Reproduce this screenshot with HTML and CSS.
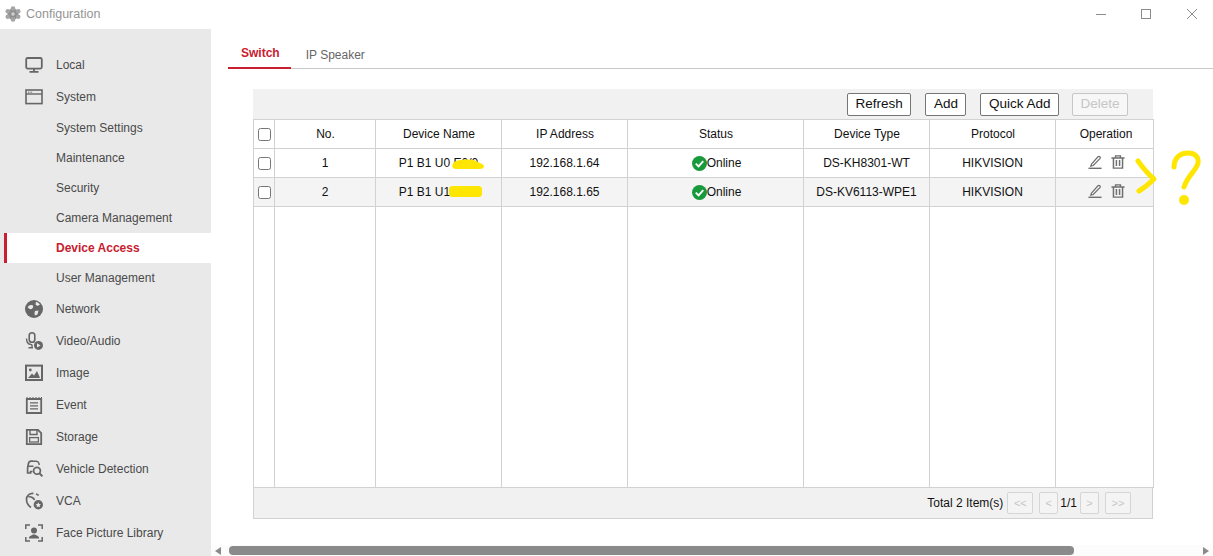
FILE: index.html
```html
<!DOCTYPE html>
<html lang="en">
<head>
    <meta charset="UTF-8">
    <meta name="viewport" content="width=device-width, initial-scale=1.0">
    <title>Configuration</title>
    <link rel="stylesheet" href="styles.css">
</head>
<body>
    <header class="titlebar">
        <div class="app-title">
            <svg class="app-logo" viewBox="0 0 16 16"><circle cx="8" cy="8" r="5.5" fill="#8f8f8f"/><circle cx="8" cy="2.6" r="2.3" fill="#a5a5a5"/><circle cx="8" cy="13.4" r="2.3" fill="#a5a5a5"/><circle cx="2.8" cy="5.2" r="2.3" fill="#a5a5a5"/><circle cx="13.2" cy="5.2" r="2.3" fill="#a5a5a5"/><circle cx="2.8" cy="10.8" r="2.3" fill="#a5a5a5"/><circle cx="13.2" cy="10.8" r="2.3" fill="#a5a5a5"/><circle cx="8" cy="8" r="1.8" fill="#d0d0d0"/></svg>
            <span>Configuration</span>
        </div>
        <div class="window-controls">
            <svg class="win-btn" viewBox="0 0 12 12"><path d="M2 6.5H12" stroke="#8c8c8c" fill="none"/></svg>
            <svg class="win-btn" viewBox="0 0 12 12"><rect x="1.5" y="1.5" width="9" height="9" stroke="#8c8c8c" fill="none"/></svg>
            <svg class="win-btn" viewBox="0 0 12 12"><path d="M1 1L11 11M11 1L1 11" stroke="#8c8c8c" fill="none"/></svg>
        </div>
    </header>

    <div class="layout">
        <nav class="sidebar">
            <a class="nav-item">
                <svg class="nav-icon" viewBox="0 0 18 18"><rect x="1.2" y="2" width="15.6" height="10.6" rx="1.5" fill="none" stroke="#666" stroke-width="1.8"/><path d="M9 13V15.5M4.5 15.8H13.5" stroke="#666" stroke-width="1.8" fill="none"/></svg>
                Local
            </a>
            <a class="nav-item">
                <svg class="nav-icon" viewBox="0 0 18 18"><rect x="1" y="2" width="16" height="13.6" fill="none" stroke="#666" stroke-width="1.6"/><path d="M1 6H17" stroke="#666" stroke-width="1.4"/><path d="M3 4.2H7.5" stroke="#666" stroke-dasharray="1 .6"/></svg>
                System
            </a>
            <a class="nav-sub">System Settings</a>
            <a class="nav-sub">Maintenance</a>
            <a class="nav-sub">Security</a>
            <a class="nav-sub">Camera Management</a>
            <a class="nav-sub active">Device Access</a>
            <a class="nav-sub">User Management</a>
            <a class="nav-item">
                <svg class="nav-icon" viewBox="0 0 18 18"><circle cx="9" cy="9" r="9" fill="#666"/><path d="M2.5 7C4.5 4.8 6.5 4.5 8 5.5C8.8 7 7.5 9 5.8 9.3C4.5 9 3.3 8 2.5 7ZM10 11L13.5 10.5L12.5 14.5L10 15.5C9.4 14 9.4 12.5 10 11ZM11 1.8C12.5 2.3 14 3.3 15 4.6L12.5 6L10.5 4.5Z" fill="#e9e9e9"/></svg>
                Network
            </a>
            <a class="nav-item">
                <svg class="nav-icon" viewBox="0 0 18 18"><rect x="4.2" y="0.8" width="5.6" height="9.4" rx="2.8" fill="none" stroke="#666" stroke-width="1.6"/><path d="M1.5 6.5C1.5 12 4.5 12.6 7 12.6M7 12.6V15.5M3.5 15.8H8" fill="none" stroke="#666" stroke-width="1.4"/><circle cx="13.5" cy="13.4" r="4.5" fill="#666"/><path d="M12 11.2V15.6L15.6 13.4Z" fill="#e9e9e9"/></svg>
                Video/Audio
            </a>
            <a class="nav-item">
                <svg class="nav-icon" viewBox="0 0 18 18"><rect x="1" y="1.6" width="16" height="14.4" fill="none" stroke="#666" stroke-width="2"/><circle cx="5.3" cy="6" r="1.4" fill="#666"/><path d="M3 14L7 9.5L9 11.5L12 7L15 14Z" fill="#666"/></svg>
                Image
            </a>
            <a class="nav-item">
                <svg class="nav-icon" viewBox="0 0 18 18"><path d="M1.8 3H16.2V17H1.8Z" fill="none" stroke="#666" stroke-width="1.8"/><path d="M2 1V3M5 1V3M8 1V3M11 1V3M14 1V3M16.5 1V3" stroke="#666"/><path d="M5 6.8H13M5 9.8H13M5 12.8H13" stroke="#666" stroke-width="1.2"/></svg>
                Event
            </a>
            <a class="nav-item">
                <svg class="nav-icon" viewBox="0 0 18 18"><path d="M1.8 1.8H13L16.2 5V16.2H1.8Z" fill="none" stroke="#666" stroke-width="1.8"/><path d="M5 2V6.5H12V2" fill="none" stroke="#666" stroke-width="1.4"/><rect x="4.6" y="9.6" width="8.8" height="4.4" fill="none" stroke="#666" stroke-width="1.3"/></svg>
                Storage
            </a>
            <a class="nav-item">
                <svg class="nav-icon" viewBox="0 0 18 18"><path d="M8 1.2H6C4.4 1.2 3.8 2.2 3.4 3.8L2.6 8V13H5.6V11.5H7.5" fill="none" stroke="#666" stroke-width="1.7"/><path d="M8 1.2H11.5C12.8 1.2 13.6 2.2 14 3.6L14.3 5M3 6.2H8.5" fill="none" stroke="#666" stroke-width="1.5"/><circle cx="12" cy="10.8" r="3.4" fill="none" stroke="#666" stroke-width="1.7"/><path d="M14.5 13.4L17.4 16.4" stroke="#666" stroke-width="2"/></svg>
                Vehicle Detection
            </a>
            <a class="nav-item">
                <svg class="nav-icon" viewBox="0 0 18 18"><path d="M8.5 1.5C4.5 1.2 1.5 3.5 1.5 7.5C1.5 11 3 13.5 6 15.5M11 2C12 2.3 13 2.8 13.6 3.6M3.5 5C6 4 9 6.5 9.5 8" fill="none" stroke="#666" stroke-width="1.7"/><circle cx="13.3" cy="12.8" r="4.7" fill="#666"/><path d="M13.3 10.2L14.1 12L16 12.2L14.6 13.4L15 15.3L13.3 14.4L11.6 15.3L12 13.4L10.6 12.2L12.5 12Z" fill="#e9e9e9"/></svg>
                VCA
            </a>
            <a class="nav-item">
                <svg class="nav-icon" viewBox="0 0 18 18"><path d="M0.8 5V1H5M13 1H17.2V5M0.8 13V17H5M13 17H17.2V13" fill="none" stroke="#666" stroke-width="1.5"/><circle cx="9" cy="6.5" r="3" fill="#666"/><path d="M3.8 14.5C4 11.5 7 11.5 7.8 10.5H10.2C11 11.5 14 11.5 14.2 14.5Z" fill="#666"/></svg>
                Face Picture Library
            </a>
        </nav>

        <main class="main">
            <div class="tabs">
                <span class="tab active">Switch</span>
                <span class="tab">IP Speaker</span>
            </div>

            <section class="panel">
                <div class="toolbar">
                    <button class="button">Refresh</button>
                    <button class="button">Add</button>
                    <button class="button">Quick Add</button>
                    <button class="button" disabled>Delete</button>
                </div>
                <table class="device-table">
                    <colgroup>
                        <col class="col-check">
                        <col class="col-no">
                        <col class="col-wide">
                        <col class="col-wide">
                        <col class="col-status">
                        <col class="col-wide">
                        <col class="col-wide">
                        <col class="col-op">
                    </colgroup>
                    <thead>
                        <tr>
                            <th><input type="checkbox"></th>
                            <th>No.</th>
                            <th>Device Name</th>
                            <th>IP Address</th>
                            <th>Status</th>
                            <th>Device Type</th>
                            <th>Protocol</th>
                            <th>Operation</th>
                        </tr>
                    </thead>
                    <tbody>
                        <tr>
                            <td><input type="checkbox"></td>
                            <td>1</td>
                            <td>P1 B1 U0 E0/0</td>
                            <td>192.168.1.64</td>
                            <td><span class="status"><svg class="status-icon" viewBox="0 0 16 16"><circle cx="8" cy="8" r="8" fill="#189a3c"/><path d="M4 8.2L7 11L12 5.4" fill="none" stroke="#fff" stroke-width="2"/></svg>Online</span></td>
                            <td>DS-KH8301-WT</td>
                            <td>HIKVISION</td>
                            <td>
                                <span class="ops">
                                    <svg class="op-icon" viewBox="0 0 16 16"><path d="M4 10.4L11.4 2C12 1.4 12.9 1.4 13.5 2C14.1 2.6 14.1 3.5 13.6 4.1L6 12L3.2 12.8Z" fill="none" stroke="#6f6f6f" stroke-width="1.4"/><path d="M0.5 15.2H15.5" stroke="#6f6f6f" stroke-width="1.6"/></svg>
                                    <svg class="op-icon" viewBox="0 0 16 16"><path d="M0.5 3.4H15.5M5.2 3V1H10.8V3" fill="none" stroke="#6f6f6f" stroke-width="1.6"/><path d="M2.8 3.4V15H13.2V3.4M6.2 5.8V12.6M9.8 5.8V12.6" fill="none" stroke="#6f6f6f" stroke-width="1.7"/></svg>
                                </span>
                            </td>
                        </tr>
                        <tr class="even">
                            <td><input type="checkbox"></td>
                            <td>2</td>
                            <td>P1 B1 U1 E0/0</td>
                            <td>192.168.1.65</td>
                            <td><span class="status"><svg class="status-icon" viewBox="0 0 16 16"><circle cx="8" cy="8" r="8" fill="#189a3c"/><path d="M4 8.2L7 11L12 5.4" fill="none" stroke="#fff" stroke-width="2"/></svg>Online</span></td>
                            <td>DS-KV6113-WPE1</td>
                            <td>HIKVISION</td>
                            <td>
                                <span class="ops">
                                    <svg class="op-icon" viewBox="0 0 16 16"><path d="M4 10.4L11.4 2C12 1.4 12.9 1.4 13.5 2C14.1 2.6 14.1 3.5 13.6 4.1L6 12L3.2 12.8Z" fill="none" stroke="#6f6f6f" stroke-width="1.4"/><path d="M0.5 15.2H15.5" stroke="#6f6f6f" stroke-width="1.6"/></svg>
                                    <svg class="op-icon" viewBox="0 0 16 16"><path d="M0.5 3.4H15.5M5.2 3V1H10.8V3" fill="none" stroke="#6f6f6f" stroke-width="1.6"/><path d="M2.8 3.4V15H13.2V3.4M6.2 5.8V12.6M9.8 5.8V12.6" fill="none" stroke="#6f6f6f" stroke-width="1.7"/></svg>
                                </span>
                            </td>
                        </tr>
                        <tr class="filler">
                            <td></td><td></td><td></td><td></td><td></td><td></td><td></td><td></td>
                        </tr>
                    </tbody>
                </table>
                <div class="pager">
                    <span class="pager-total">Total 2 Item(s)</span>
                    <button class="page-btn wide" disabled>&lt;&lt;</button>
                    <button class="page-btn" disabled>&lt;</button>
                    <span class="pager-num">1/1</span>
                    <button class="page-btn" disabled>&gt;</button>
                    <button class="page-btn wide" disabled>&gt;&gt;</button>
                </div>
            </section>

            <div class="hscroll">
                <span class="arrow-left"></span>
                <div class="hscroll-track"><div class="hscroll-thumb"></div></div>
                <span class="arrow-right"></span>
            </div>
        </main>
    </div>

    <!-- yellow marker someone drew over the screenshot -->
    <svg class="markup" viewBox="0 0 1213 556">
        <path d="M456 161C462 159 470 159 475 160.5L481 163.5C486 165.5 484 169 480 169H456C451 169 451 163 456 161Z" fill="#ffe600"/>
        <rect x="449" y="186" width="33" height="11" rx="3.5" fill="#ffe600"/>
        <path d="M1138 161C1143 168 1148 174 1154 179C1149 184 1144 188 1139 191" stroke="#ffe600" stroke-width="5" stroke-linecap="round" stroke-linejoin="round" fill="none"/>
        <path d="M1174 167C1174 158 1180 153 1188 153C1195 153 1199 157 1198 163C1196 171 1188 175 1184 187" stroke="#ffe600" stroke-width="5" stroke-linecap="round" fill="none"/>
        <circle cx="1184" cy="200" r="5" fill="#ffe600"/>
    </svg>
</body>
</html>
```

FILE: styles.css
```css
* {
    box-sizing: border-box;
}

body {
    margin: 0;
    height: 556px;
    overflow: hidden;
    display: flex;
    flex-direction: column;
    position: relative;
    background-color: #fff;
    font-family: "Liberation Sans", Arial, sans-serif;
    font-size: 12px;
    color: #1c1c1c;
}

.titlebar {
    height: 29px;
    flex: none;
    padding-bottom: 2px;
    display: flex;
    justify-content: space-between;
    align-items: center;
}

.app-title {
    display: flex;
    align-items: center;
    gap: 5px;
    padding-left: 5px;
    font-size: 12.5px;
    color: #949494;
}

.app-logo {
    width: 16px;
    height: 16px;
}

.window-controls {
    display: flex;
    gap: 34px;
    padding-right: 15px;
}

.win-btn {
    width: 12px;
    height: 12px;
}

.layout {
    flex: 1;
    display: flex;
    min-height: 0;
}

.sidebar {
    width: 211px;
    flex: none;
    padding: 20px 0 0 4px;
    background-color: #e9e9e9;
    color: #4a4a4a;
}

.nav-item,
.nav-sub {
    display: flex;
    align-items: center;
}

.nav-item {
    height: 32px;
    padding-left: 21px;
}

.nav-icon {
    width: 18px;
    height: 18px;
    margin-right: 13px;
    flex: none;
}

.nav-sub {
    height: 30px;
    padding-left: 52px;
}

.nav-sub.active {
    padding-left: 49px;
    border-left: 3px solid #c8202f;
    background-color: #fff;
    color: #c8202f;
    font-weight: bold;
}

.main {
    flex: 1;
    min-width: 0;
    display: flex;
    flex-direction: column;
}

.tabs {
    height: 40px;
    margin: 0 0 20px 17px;
    display: flex;
    border-bottom: 1px solid #c9c9c9;
}

.tab {
    padding: 19px 15px 0;
    color: #666;
}

.tab.active {
    padding: 17px 11px 0 13px;
    border-bottom: 2px solid #c8202f;
    height: 40px;
    color: #c8202f;
    font-weight: bold;
}

.panel {
    width: 900px;
    margin-left: 42px;
}

.toolbar {
    height: 30px;
    padding-right: 25px;
    display: flex;
    justify-content: flex-end;
    align-items: center;
    gap: 14px;
    background-color: #f1f1f1;
}

.button {
    height: 23px;
    padding: 0 7.5px 1px;
    background-color: #fff;
    border: 1px solid #767676;
    border-radius: 2px;
    font-family: inherit;
    font-size: 13.5px;
    color: #111;
}

.button:disabled {
    margin-left: -1px;
    border-color: #c6c6c6;
    color: #c6c6c6;
    background-color: #f7f7f7;
}

.device-table {
    width: 900px;
    table-layout: fixed;
    border-collapse: collapse;
    color: #111;
}

.device-table th,
.device-table td {
    height: 29px;
    padding: 0;
    border: 1px solid #d2d2d2;
    text-align: center;
    font-weight: normal;
}

.device-table th {
    padding-left: 1px;
}

.device-table th:last-child {
    padding-left: 3px;
}

.device-table input {
    display: block;
    margin: 0 auto;
    width: 13px;
    height: 13px;
}

.col-check { width: 21px; }
.col-no { width: 101px; }
.col-wide { width: 126px; }
.col-status { width: 176px; }
.col-op { width: 98px; }

.even td {
    background-color: #f4f4f4;
}

.device-table .filler td {
    height: 281px;
}

.status {
    display: flex;
    justify-content: center;
    align-items: center;
    padding-left: 2px;
}

.status-icon {
    width: 15px;
    height: 15px;
}

.ops {
    display: flex;
    justify-content: center;
    gap: 9px;
    padding: 0 0 2px 4px;
}

.op-icon {
    width: 14px;
    height: 14px;
}

.pager {
    height: 31px;
    padding-right: 21px;
    display: flex;
    justify-content: flex-end;
    align-items: center;
    background-color: #f1f1f1;
    border: 1px solid #d2d2d2;
    border-top: 0;
    color: #111;
}

.pager-total {
    margin-right: 4px;
}

.pager-num {
    margin: 0 3px 0 2px;
}

.page-btn {
    width: 19px;
    height: 22px;
    padding: 0;
    background-color: #f4f4f4;
    border: 1px solid #d5d5d5;
    border-radius: 2px;
    font-family: inherit;
    font-size: 11px;
    color: #c6c6c6;
}

.page-btn.wide {
    width: 26px;
}

.page-btn:first-of-type {
    margin-right: 6px;
}

.page-btn:last-of-type {
    margin-left: 6px;
}

.hscroll {
    margin-top: auto;
    height: 11px;
    display: flex;
    align-items: center;
    background-color: #fcfcfc;
}

.hscroll-track {
    flex: 1;
    margin: 0 4px 0 8px;
}

.hscroll-thumb {
    width: 845px;
    height: 9px;
    border-radius: 4px;
    background-color: #8a8a8a;
}

.arrow-left,
.arrow-right {
    width: 0;
    height: 0;
    border-top: 4px solid transparent;
    border-bottom: 4px solid transparent;
}

.arrow-left {
    margin-left: 4px;
    border-right: 6px solid #8a8a8a;
}

.arrow-right {
    margin-right: 4px;
    border-left: 6px solid #8a8a8a;
}

.markup {
    position: absolute;
    top: 0;
    left: 0;
    width: 1213px;
    height: 556px;
    pointer-events: none;
}
```
